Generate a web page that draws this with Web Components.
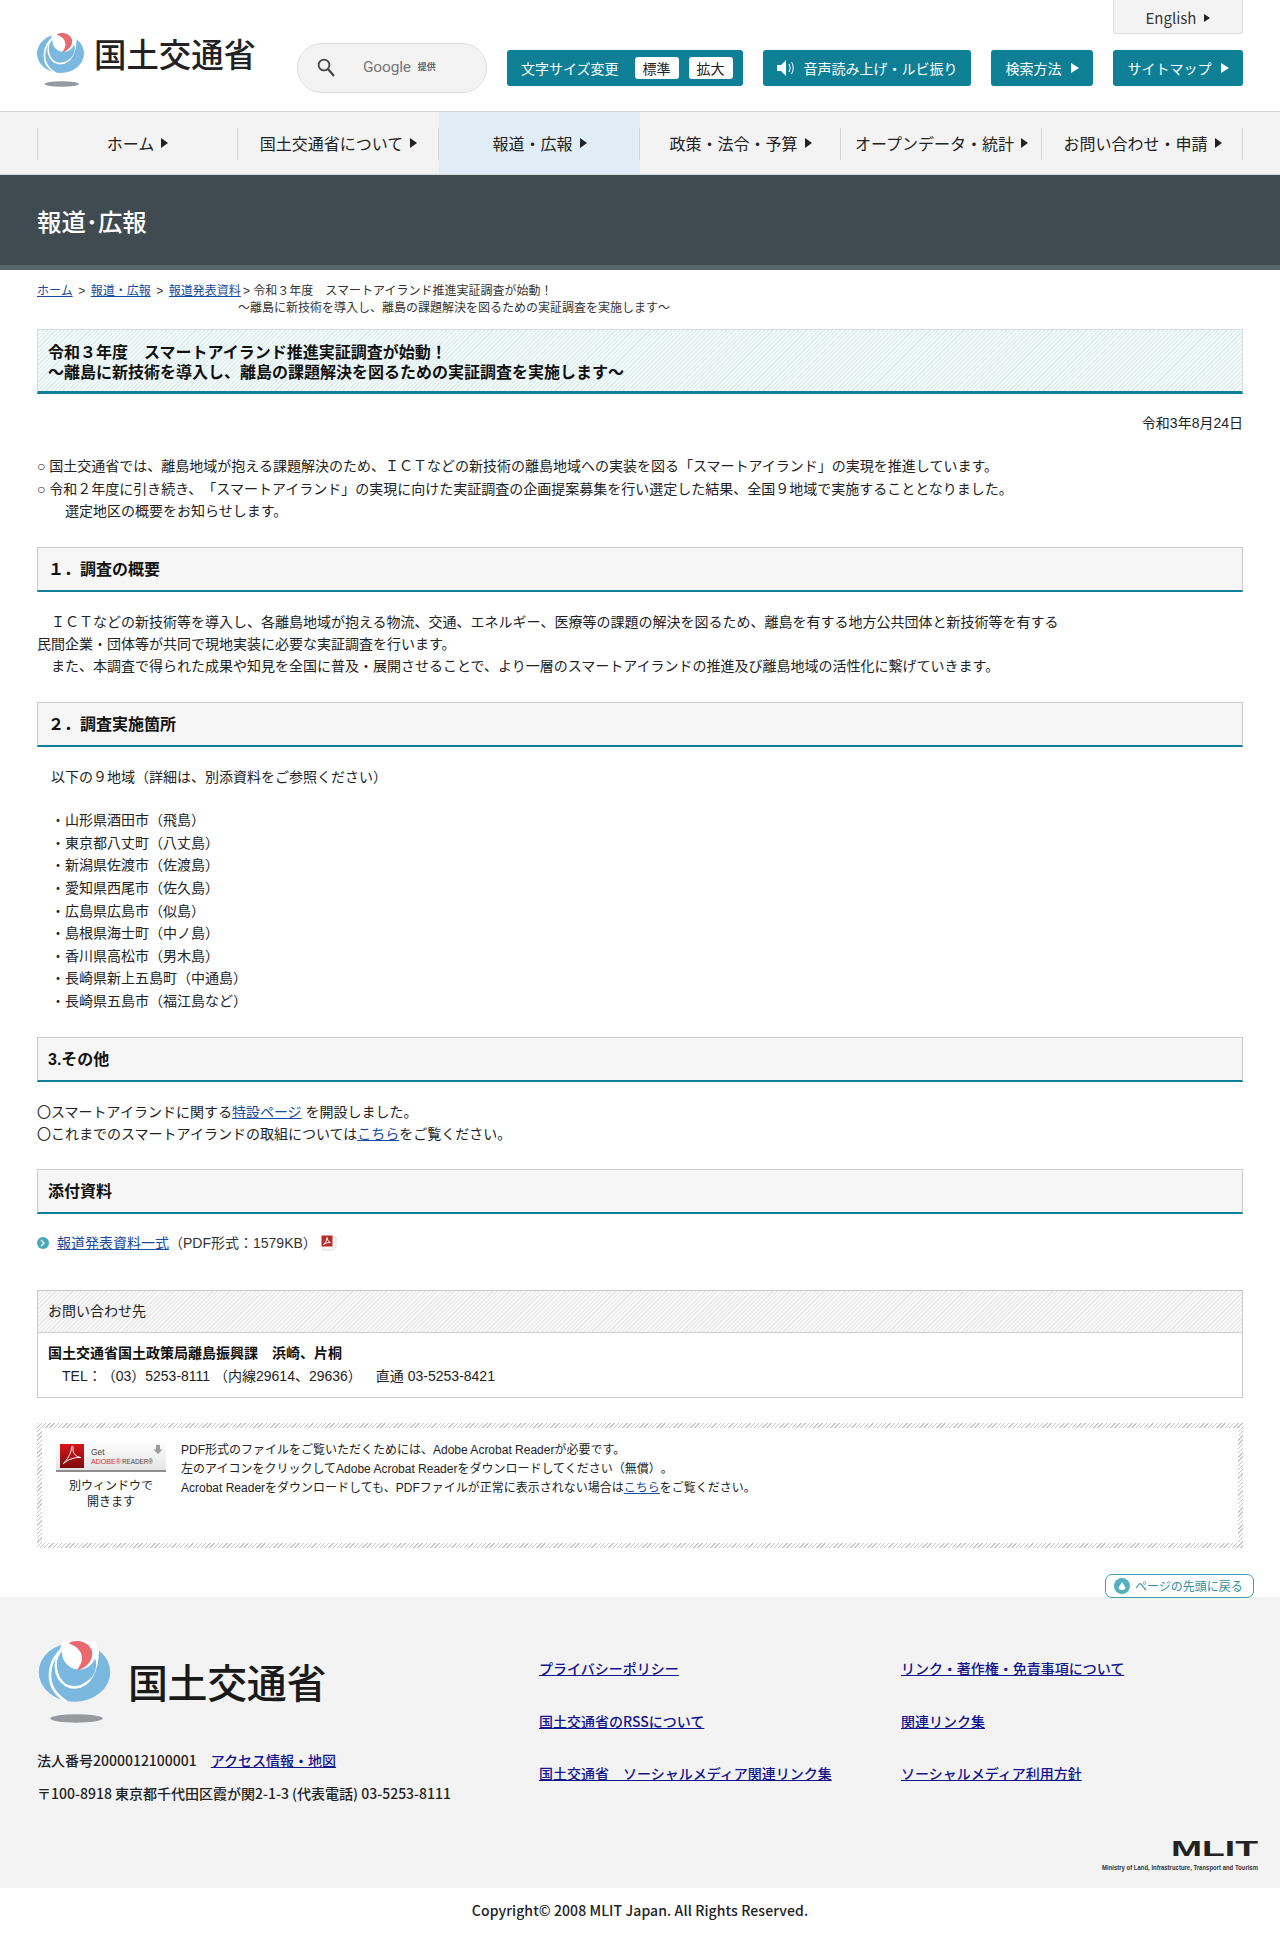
<!DOCTYPE html>
<html lang="ja"><head><meta charset="utf-8"><title>報道・広報</title>
<style>
html,body{margin:0;padding:0;background:#fff}
body{font-family:"Liberation Sans","Noto Sans CJK JP",sans-serif;font-size:14px;line-height:22.4px;color:#222;text-spacing-trim:space-all}
</style></head><body>
<site-header></site-header>
<site-nav></site-nav>
<page-band>報道･広報</page-band>
<main-col>
  <bread-crumbs></bread-crumbs>
  <title-box>令和３年度　スマートアイランド推進実証調査が始動！<br>～離島に新技術を導入し、離島の課題解決を図るための実証調査を実施します～</title-box>
  <date-line>令和3年8月24日</date-line>
  <text-para style="margin-top:21px">○ 国土交通省では、離島地域が抱える課題解決のため、ＩＣＴなどの新技術の離島地域への実装を図る「スマートアイランド」の実現を推進しています。<br>○ 令和２年度に引き続き、「スマートアイランド」の実現に向けた実証調査の企画提案募集を行い選定した結果、全国９地域で実施することとなりました。<br>　　選定地区の概要をお知らせします。</text-para>
  <sec-head>１．調査の概要</sec-head>
  <text-para>　ＩＣＴなどの新技術等を導入し、各離島地域が抱える物流、交通、エネルギー、医療等の課題の解決を図るため、離島を有する地方公共団体と新技術等を有する<br>民間企業・団体等が共同で現地実装に必要な実証調査を行います。<br>　また、本調査で得られた成果や知見を全国に普及・展開させることで、より一層のスマートアイランドの推進及び離島地域の活性化に繋げていきます。</text-para>
  <sec-head>２．調査実施箇所</sec-head>
  <text-para>　以下の９地域（詳細は、別添資料をご参照ください）</text-para>
  <text-para style="margin-top:21px;line-height:22.6px">　・山形県酒田市（飛島）<br>　・東京都八丈町（八丈島）<br>　・新潟県佐渡市（佐渡島）<br>　・愛知県西尾市（佐久島）<br>　・広島県広島市（似島）<br>　・島根県海士町（中ノ島）<br>　・香川県高松市（男木島）<br>　・長崎県新上五島町（中通島）<br>　・長崎県五島市（福江島など）</text-para>
  <sec-head>3.その他</sec-head>
  <text-para>〇スマートアイランドに関する<a-link>特設ページ</a-link> を開設しました。<br>〇これまでのスマートアイランドの取組については<a-link>こちら</a-link>をご覧ください。</text-para>
  <sec-head>添付資料</sec-head>
  <file-line></file-line>
  <contact-box></contact-box>
  <adobe-box></adobe-box>
  <top-link></top-link>
</main-col>
<site-footer></site-footer>
<script>
const LOGO=`<svg viewBox="27 33 218 250" width="100%" height="100%" aria-hidden="true">
<ellipse cx="136" cy="128" rx="109" ry="90" fill="#7ab8e0"/>
<circle cx="150" cy="65" r="58" fill="#fff"/>
<path d="M90 70C60 130 100 178 140 174C180 172 205 130 207 60" fill="none" stroke="#fff" stroke-width="8"/>
<circle cx="142" cy="105" r="60" fill="#7ab8e0"/>
<circle cx="150" cy="68" r="52" fill="#fff"/>
<path d="M108 48C50 95 40 175 112 218" fill="none" stroke="#fff" stroke-width="8"/>
<path d="M118 40C135 28 175 30 188 60C198 90 170 118 143 122C165 95 170 60 118 40Z" fill="#e8696f"/>
<ellipse cx="142" cy="269" rx="80" ry="13" fill="#96999d"/></svg>`;
function def(name,css,html){customElements.define(name,class extends HTMLElement{constructor(){super();const s=this.attachShadow({mode:"open"});s.innerHTML=`<style>${css}</style>${html}`;}});}
const tri=(c,w=7,h=9)=>`<svg width="${w}" height="${h}" viewBox="0 0 7 9" preserveAspectRatio="none" style="flex:none"><path d="M0 0L7 4.5L0 9Z" fill="${c}"/></svg>`;
const NS=`font-family:"Noto Sans CJK JP",sans-serif;`;

def("a-link",`:host{display:inline}a{color:#1a4a9c;text-decoration:underline}`,`<a href="#"><slot></slot></a>`);

def("teal-btn",`:host{display:flex;align-items:center;justify-content:center;gap:9px;height:36px;box-sizing:border-box;background:#0f7f96;border-radius:3px;color:#fff;font-size:14px;line-height:20px;${NS}}`,`<slot></slot>`);

def("size-chip",`:host{display:block;background:#fff;color:#222;border-radius:3px;height:22px;line-height:22px;padding:0 8px;font-size:14px}`,`<slot></slot>`);

def("site-header",`:host{display:block;height:112px;box-sizing:border-box;border-bottom:1px solid #d8d8d8;${NS}}
.w{position:relative;height:111px;display:flex;padding:0 37px;box-sizing:border-box;align-items:flex-start}
.logo{width:224px;height:54px;margin-top:33px;display:flex;flex:none}
.mark{width:47px;height:54px;flex:none}
.lt{font-size:32.4px;line-height:32px;font-weight:500;color:#222;margin:4px 0 0 10px;white-space:nowrap}
.search{width:190px;height:50px;margin:43px 0 0 36px;box-sizing:border-box;border:1px solid #ddd;border-radius:25px;background:#f3f3f3;display:flex;align-items:center;flex:none;color:#777;padding-bottom:2px}
.search svg{margin-left:19px}
.g{font-family:"Roboto",sans-serif;font-size:15.5px;margin-left:28px;letter-spacing:-.2px}
.p{font-size:9px;margin-left:7px;font-weight:700;color:#666}
.btns{display:flex;margin:50px 0 0 20px;gap:20px}
.en{position:absolute;right:37px;top:0;width:130px;height:34px;box-sizing:border-box;background:#f3f3f3;border:1px solid #ddd;border-top:0;border-radius:0 0 3px 3px;display:flex;align-items:center;justify-content:center;gap:8px;font-size:15px;color:#333;padding-top:3px}
`,`<div class="w">
<div class="logo"><div class="mark">${LOGO}</div><div class="lt">国土交通省</div></div>
<div class="search"><svg width="18" height="19" viewBox="0 0 18 19"><circle cx="7" cy="7" r="5.4" fill="none" stroke="#444" stroke-width="1.8"/><path d="M11 11L17 18" stroke="#444" stroke-width="2.2"/></svg><span class="g">Google</span><span class="p">提供</span></div>
<div class="btns">
<teal-btn style="width:236px;justify-content:flex-start;padding:0 6px 0 14px"><span>文字サイズ変更</span><size-chip style="margin-left:7px">標準</size-chip><size-chip style="margin-left:1px">拡大</size-chip></teal-btn>
<teal-btn style="width:208px"><svg width="18" height="18" viewBox="0 0 18 18"><path d="M0 6H4L9 1V17L4 12H0Z" fill="#fff"/><path d="M12 5Q14.5 9 12 13M14.5 3Q18 9 14.5 15" fill="none" stroke="#fff" stroke-width="1"/></svg><span>音声読み上げ・ルビ振り</span></teal-btn>
<teal-btn style="width:102px"><span>検索方法</span>${tri("#fff",8,10)}</teal-btn>
<teal-btn style="width:130px"><span>サイトマップ</span>${tri("#fff",8,10)}</teal-btn>
</div>
<div class="en"><span>English</span>${tri("#222",6,8)}</div>
</div>`);

def("nav-item",`:host{flex:none;width:201px;height:62px;display:flex;align-items:center;justify-content:center;gap:7px;position:relative;font-size:16px;color:#222;white-space:nowrap;box-sizing:border-box}
:host([active]){background:#e1edf6}
.s{position:absolute;right:0;top:16px;height:32px;width:1px;background:#d4d4d4}`,`<slot></slot>${tri("#222",7,10)}<i class="s"></i>`);

def("site-nav",`:host{display:block;height:63px;background:#f3f3f3;border-bottom:1px solid #d8d8d8;box-sizing:border-box;${NS}}
.w{display:flex;padding-left:37px;position:relative}
.l{position:absolute;left:37px;top:16px;height:32px;width:1px;background:#d4d4d4}`,`<div class="w"><i class="l"></i>
<nav-item>ホーム</nav-item><nav-item>国土交通省について</nav-item><nav-item active>報道・広報</nav-item><nav-item>政策・法令・予算</nav-item><nav-item>オープンデータ・統計</nav-item><nav-item>お問い合わせ・申請</nav-item></div>`);

def("page-band",`:host{display:block;height:95px;box-sizing:border-box;background:#3f4b51;border-bottom:5px solid #56646b;color:#fff;font-size:24.4px;line-height:92px;padding-left:37px;font-weight:500;${NS}}`,`<slot></slot>`);

def("main-col",`:host{display:block;padding:0 37px}`,`<slot></slot>`);

def("bread-crumbs",`:host{display:flex;padding-top:13px;font-size:12px;line-height:17px;color:#333;white-space:pre}
.l{word-spacing:2.2px;width:206px;flex:none}
.t{display:block}
.u{margin-left:-5px}`,`<span class="l"><a-link>ホーム</a-link> &gt; <a-link>報道・広報</a-link> &gt; <a-link>報道発表資料</a-link></span><span class="t">&gt; 令和３年度　スマートアイランド推進実証調査が始動！
<span class="u">～離島に新技術を導入し、離島の課題解決を図るための実証調査を実施します～</span></span>`);

def("title-box",`:host{display:block;margin-top:12px;height:65px;box-sizing:border-box;border:1px solid #d3dedf;border-bottom:3px solid #0f7f96;padding:13px 10px 0;font-size:16px;line-height:20px;font-weight:700;color:#111;
background:repeating-linear-gradient(135deg,#dfeef0 0 1.5px,#f6fbfb 1.5px 3px)}`,`<slot></slot>`);

def("date-line",`:host{display:block;margin-top:18px;text-align:right;color:#222}`,`<slot></slot>`);
def("text-para",`:host{display:block;margin-top:19px;white-space:nowrap}`,`<slot></slot>`);
def("sec-head",`:host{display:block;margin-top:24px;height:45px;box-sizing:border-box;background:#f6f6f6;border:1px solid #ccc;border-bottom:2px solid #0f7f96;padding-left:10px;font-size:16px;line-height:43px;font-weight:700;color:#111}`,`<slot></slot>`);

def("file-line",`:host{display:flex;align-items:center;margin-top:18px;height:22px;color:#333}
.d{width:12px;height:12px;border-radius:50%;background:#46a8b8;margin-right:8px;display:flex;align-items:center;justify-content:center}
.p{margin-left:4px}`,`<span class="d"><svg width="6" height="8" viewBox="0 0 6 8"><path d="M1 1L4 4L1 7" fill="none" stroke="#fff" stroke-width="1.3"/></svg></span><span><a-link>報道発表資料一式</a-link>（PDF形式：1579KB）</span>
<svg class="p" width="16" height="16" viewBox="0 0 16 16"><path d="M2 10V15H12L15 12V2H11" fill="#fafafa" stroke="#ddd"/><rect x="0.5" y="0.5" width="11" height="11" fill="#b92b2b"/><path d="M2.5 9.5Q5.5 7.5 6 2.5Q6.3 6.5 9.5 7.5Q6 7 2.5 9.5Z" fill="none" stroke="#fff" stroke-width=".9"/></svg>`);

def("contact-box",`:host{display:block;margin-top:36px;height:108px;box-sizing:border-box;border:1px solid #ccc}
.h{height:42px;box-sizing:border-box;border-bottom:1px solid #ccc;padding-left:10px;line-height:41px;background:repeating-linear-gradient(135deg,#ececec 0 1.5px,#f9f9f9 1.5px 3px)}
.b{padding:9px 10px 0;color:#222}
.n{font-weight:700;color:#111;line-height:22px;height:23px}
.t{line-height:22px}`,`<div class="h">お問い合わせ先</div><div class="b"><div class="n">国土交通省国土政策局離島振興課　浜崎、片桐</div><div class="t">　TEL：（03）5253-8111 （内線29614、29636）　直通 03-5253-8421</div></div>`);

def("adobe-badge",`:host{display:block;width:110px;height:30px}svg{display:block}`,`<svg width="110" height="30" viewBox="0 0 110 30"><defs><linearGradient id="bg" x1="0" y1="0" x2="0" y2="1"><stop offset="0" stop-color="#fdfdfd"/><stop offset="1" stop-color="#e4e4e4"/></linearGradient><linearGradient id="rd" x1="0" y1="0" x2="0" y2="1"><stop offset="0" stop-color="#d8161a"/><stop offset="1" stop-color="#7c0b0c"/></linearGradient></defs>
<rect width="110" height="28" fill="url(#bg)"/><rect y="28" width="110" height="2" fill="#8d8d8d"/>
<rect x="4" y="2" width="24" height="24" fill="url(#rd)"/>
<path d="M7 22C11 18 15 12 15.5 6C15.8 3 17.5 4 17 7C16.5 11 20 15 25 15.5C20 15 12 17 7 22Z" fill="none" stroke="#fff" stroke-width="1"/>
<text x="35" y="13" font-family="Liberation Sans" font-size="8.5" fill="#444">Get</text>
<text x="35" y="22" font-family="Liberation Sans" font-size="8" textLength="30" lengthAdjust="spacingAndGlyphs" fill="#d4322e">ADOBE®</text>
<text x="66" y="22" font-family="Liberation Sans" font-size="8" textLength="31" lengthAdjust="spacingAndGlyphs" fill="#444">READER®</text>
<path d="M100 3H104V7.5H106.5L102 12L97.500 7.500H100Z" fill="#9c9c9c"/></svg>`);

def("adobe-box",`:host{display:block;margin-top:25px;height:125px;box-sizing:border-box;padding:5px;background:repeating-linear-gradient(135deg,#c8c8c8 0 1px,#fff 1px 3px)}
.i{background:#fff;height:100%;display:flex;padding:14px 14px 0;box-sizing:border-box;font-size:12px;line-height:19px;color:#222}
.l{width:110px;flex:none;text-align:center;line-height:16px}
.c{margin-top:6px}
.r{margin-left:15px;white-space:nowrap;margin-top:-1px}`,`<div class="i"><div class="l"><adobe-badge></adobe-badge><div class="c">別ウィンドウで<br>開きます</div></div><div class="r">PDF形式のファイルをご覧いただくためには、Adobe Acrobat Readerが必要です。<br>左のアイコンをクリックしてAdobe Acrobat Readerをダウンロードしてください（無償）。<br>Acrobat Readerをダウンロードしても、PDFファイルが正常に表示されない場合は<a-link>こちら</a-link>をご覧ください。</div></div>`);

def("top-link",`:host{display:flex;justify-content:flex-end;margin:26px -11px -1px 0;position:relative;z-index:2;height:24px}
.t{width:149px;height:24px;box-sizing:border-box;border:1px solid #3f9eae;border-radius:7px;background:#fff;display:flex;align-items:center;justify-content:center;gap:5px;color:#2f8fa2;font-size:12px;line-height:20px;padding-right:2px;${NS}}
.d{width:16px;height:16px;border-radius:50%;background:#52b0bf;display:flex;align-items:center;justify-content:center}`,`<div class="t"><span class="d"><svg width="8" height="9" viewBox="0 0 8 9"><path d="M4 0L7.500 5.500A3.600 3.600 0 0 1 .5 5.500Z" fill="#fff"/></svg></span><span>ページの先頭に戻る</span></div>`);

def("foot-link",`:host{display:inline}a{color:#14148c;text-decoration:underline}`,`<a href="#"><slot></slot></a>`);

def("site-footer",`:host{display:block;${NS}color:#222;font-size:14px;line-height:20px;font-weight:500}
.f{height:291px;background:#f3f3f3;box-sizing:border-box;padding:44px 22px 0 37px;position:relative;display:flex}
.left{width:502px;flex:none}
.logo{display:flex;height:82px}
.mark{width:75px;height:82px;flex:none}
.lt{font-size:40px;line-height:40px;font-weight:500;color:#1a1a1a;margin:20px 0 0 16px;letter-spacing:-.4px;white-space:nowrap}
.a{margin-top:27px;height:33px;white-space:pre}
.links{display:grid;grid-template-columns:362px auto;grid-auto-rows:52.5px;padding-top:17px;white-space:nowrap}
.mlit{position:absolute;right:22px;top:243px}
.cp{text-align:center;height:51px;line-height:44px;letter-spacing:.1px;color:#222}`,`<div class="f"><div class="left"><div class="logo"><div class="mark">${LOGO}</div><div class="lt">国土交通省</div></div>
<div class="a">法人番号2000012100001　<foot-link>アクセス情報・地図</foot-link></div><div>〒100-8918 東京都千代田区霞が関2-1-3 (代表電話) 03-5253-8111</div></div>
<div class="links"><foot-link>プライバシーポリシー</foot-link><foot-link>リンク・著作権・免責事項について</foot-link><foot-link>国土交通省のRSSについて</foot-link><foot-link>関連リンク集</foot-link><foot-link>国土交通省　ソーシャルメディア関連リンク集</foot-link><foot-link>ソーシャルメディア利用方針</foot-link></div>
<svg class="mlit" width="160" height="34" viewBox="0 0 160 34"><text x="73" y="16" textLength="87" lengthAdjust="spacingAndGlyphs" font-family="Liberation Sans" font-weight="700" font-size="22" fill="#222">MLIT</text><text x="4" y="30" textLength="156" lengthAdjust="spacingAndGlyphs" font-family="Liberation Sans" font-weight="700" font-size="8" fill="#333">Ministry of Land, Infrastructure, Transport and Tourism</text></svg>
</div><div class="cp">Copyright© 2008 MLIT Japan. All Rights Reserved.</div>`);
</script>
</body></html>
